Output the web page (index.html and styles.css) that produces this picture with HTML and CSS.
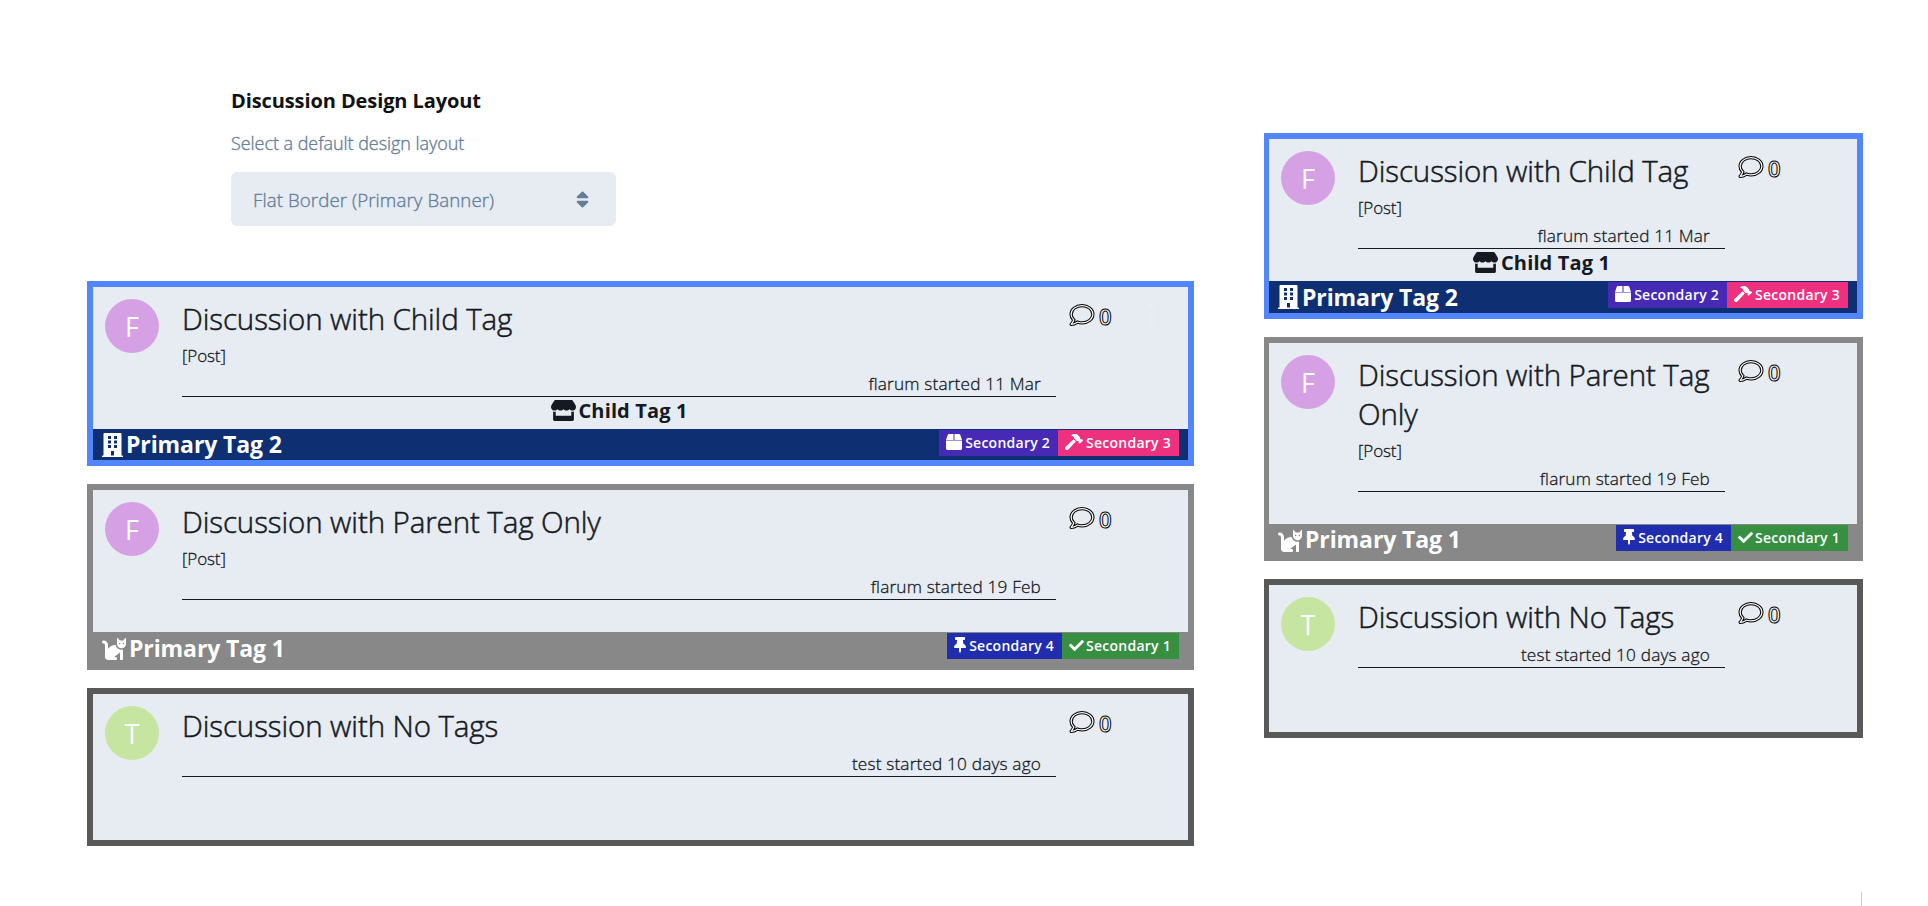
FILE: index.html
```html
<!DOCTYPE html>
<html lang="en">
<head>
<meta charset="utf-8">
<title>Discussion Design Layout</title>
<link rel="stylesheet" href="styles.css">
</head>
<body>
<svg class="sprite" aria-hidden="true">
  <symbol id="comment" viewBox="0 0 512 512" overflow="visible"><path d="M256 32C114.6 32 0 125.1 0 240c0 47.6 19.9 91.2 52.9 126.3C38 405.7 7 439.1 6.5 439.5c-6.6 7-8.4 17.2-4.6 26S14.4 480 24 480c61.5 0 110-25.7 139.1-46.3C192 442.8 223.2 448 256 448c141.4 0 256-93.1 256-208S397.4 32 256 32zm0 368c-26.7 0-53.1-4.1-78.4-12.1l-22.7-7.2-19.5 13.8c-14.3 10.1-33.9 21.4-57.5 29 7.3-12.1 14.4-25.7 19.9-40.2l10.6-28.1-20.6-21.8C69.7 314.1 48 282.2 48 240c0-88.2 93.3-160 208-160s208 71.8 208 160-93.3 160-208 160z"/></symbol>
  <symbol id="building" viewBox="0 0 448 512"><path fill-rule="evenodd" d="M436 480h-20V24c0-13-11-24-24-24H56C43 0 32 11 32 24v456H12c-7 0-12 5-12 12v20h448v-20c0-7-5-12-12-12zM128 64h64v64h-64zM256 64h64v64h-64zM128 160h64v64h-64zM256 160h64v64h-64zM128 256h64v64h-64zM256 256h64v64h-64zM192 384h64v96h-64z"/></symbol>
  <symbol id="store" viewBox="0 0 616 512"><path d="M602 118.6L537.1 15C531.3 5.7 521 0 510 0H106C95 0 84.7 5.7 78.9 15L14 118.6c-33.5 53.5-3.8 127.9 58.8 136.4 4.5.6 9.1.9 13.7.9 29.6 0 55.8-13 73.8-33.1 18 20.1 44.3 33.1 73.8 33.1 29.6 0 55.8-13 73.8-33.1 18 20.1 44.3 33.1 73.8 33.1 29.6 0 55.8-13 73.8-33.1 18.1 20.1 44.3 33.1 73.8 33.1 4.7 0 9.2-.3 13.7-.9 62.8-8.4 92.6-82.8 59-136.4zM529.5 288c-10 0-19.9-1.5-29.5-3.8V384H116v-99.8c-9.6 2.2-19.5 3.8-29.5 3.8-6 0-12.1-.4-18-1.2-5.6-.8-11.1-2.1-16.4-3.6V480c0 17.7 14.3 32 32 32h448c17.7 0 32-14.3 32-32V283.2c-5.4 1.6-10.8 2.9-16.4 3.6-6.1.8-12.1 1.2-18.2 1.2z"/></symbol>
  <symbol id="box" viewBox="0 0 512 512"><path d="M509.5 184.6L458.9 32.8C452.4 13.2 434.1 0 413.4 0H272v192h238.7c-.4-2.5-.4-5-1.2-7.4zM240 0H98.6c-20.7 0-39 13.2-45.5 32.8L2.5 184.6c-.8 2.4-.8 4.9-1.2 7.4H240V0zM0 208v256c0 26.5 21.5 48 48 48h416c26.5 0 48-21.5 48-48V208H0z"/></symbol>
  <symbol id="hammer" viewBox="0 0 576 512"><path d="M571.31 193.94l-22.63-22.63c-6.25-6.25-16.38-6.25-22.63 0l-11.31 11.31-28.9-28.9c5.63-21.31.36-44.9-16.35-61.61l-45.25-45.25c-62.48-62.48-163.79-62.48-226.28 0l90.51 45.25v18.75c0 16.97 6.74 33.25 18.75 45.25l49.14 49.14c16.71 16.71 40.3 21.98 61.61 16.35l28.9 28.9-11.31 11.31c-6.25 6.25-6.25 16.38 0 22.63l22.63 22.63c6.25 6.25 16.38 6.25 22.63 0l90.51-90.51c6.23-6.24 6.23-16.37-.02-22.62zm-286.72-15.2c-3.7-3.7-6.84-7.79-9.85-11.95L19.64 404.96c-25.57 23.88-26.26 64.19-1.53 88.93s65.05 24.05 88.92-1.53l238.13-255.07c-3.96-2.91-7.9-5.87-11.44-9.41l-49.13-49.14z"/></symbol>
  <symbol id="thumbtack" viewBox="0 0 384 512"><path d="M298.028 214.267L285.793 96H328c13.255 0 24-10.745 24-24V24c0-13.255-10.745-24-24-24H56C42.745 0 32 10.745 32 24v48c0 13.255 10.745 24 24 24h42.207L85.972 214.267C37.465 236.82 0 277.261 0 328c0 13.255 10.745 24 24 24h136v104.007c0 1.242.289 2.467.845 3.578l24 48c2.941 5.882 11.364 5.893 14.311 0l24-48a8.008 8.008 0 0 0 .845-3.578V352h136c13.255 0 24-10.745 24-24-.001-51.183-37.983-91.42-85.973-113.733z"/></symbol>
  <symbol id="check" viewBox="0 0 512 512"><path d="M173.898 439.404l-166.4-166.4c-9.997-9.997-9.997-26.206 0-36.204l36.203-36.204c9.997-9.998 26.207-9.998 36.204 0L192 312.69 432.095 72.596c9.997-9.997 26.207-9.997 36.204 0l36.203 36.204c9.997 9.997 9.997 26.206 0 36.204l-294.4 294.401c-9.998 9.997-26.207 9.997-36.204-.001z"/></symbol>
  <symbol id="cat" viewBox="0 0 512 512"><path d="M290.59 192c-20.18 0-106.82 1.98-162.59 85.95V192c0-52.94-43.06-96-96-96-17.67 0-32 14.33-32 32s14.33 32 32 32c17.64 0 32 14.36 32 32v256c0 35.3 28.7 64 64 64h176c8.84 0 16-7.16 16-16v-16c0-17.67-14.33-32-32-32h-32l128-96v144c0 8.84 7.16 16 16 16h32c8.84 0 16-7.16 16-16V289.86c-10.29 2.67-20.89 4.54-32 4.54-61.81 0-113.52-44.05-125.41-102.4zM448 96h-64l-64-64v134.4c0 53.02 42.98 96 96 96s96-42.98 96-96V32l-64 64zm-72 80c-8.84 0-16-7.16-16-16s7.16-16 16-16 16 7.16 16 16-7.16 16-16 16zm80 0c-8.84 0-16-7.16-16-16s7.16-16 16-16 16 7.16 16 16-7.16 16-16 16z"/></symbol>
  <symbol id="sort" viewBox="0 0 320 512"><path d="M41 288h238c21.4 0 32.1 25.9 17 41L177 448c-9.4 9.4-24.6 9.4-33.9 0L24 329c-15.1-15.1-4.4-41 17-41zm255-105L177 64c-9.4-9.4-24.6-9.4-33.9 0L24 183c-15.1 15.1-4.4 41 17 41h238c21.4 0 32.1-25.9 17-41z"/></symbol>
</svg>

<main class="page">
  <section class="column column-wide">
    <div class="setting">
      <h2 class="setting-title">Discussion Design Layout</h2>
      <p class="setting-help">Select a default design layout</p>
      <div class="select"><span>Flat Border (Primary Banner)</span><svg class="select-icon"><use href="#sort"/></svg></div>
    </div>
    <div class="list">
      <article class="card card-blue">
        <div class="card-main">
          <div class="avatar avatar-f">F</div>
          <div class="content">
            <h3 class="title">Discussion with Child Tag</h3>
            <p class="post">[Post]</p>
            <p class="meta">flarum started 11 Mar</p>
            <div class="child"><svg class="child-icon"><use href="#store"/></svg>Child Tag 1</div>
          </div>
          <div class="replies"><svg class="comment"><use href="#comment"/></svg><span class="count">0</span><span class="dots"><i></i><i></i><i></i></span></div>
        </div>
        <footer class="banner">
          <div class="primary"><svg class="i-building"><use href="#building"/></svg>Primary Tag 2</div>
          <div class="badges">
            <span class="badge badge-purple"><svg class="i-box"><use href="#box"/></svg>Secondary 2</span>
            <span class="badge badge-pink"><svg class="i-hammer"><use href="#hammer"/></svg>Secondary 3</span>
          </div>
        </footer>
      </article>
      <article class="card card-gray">
        <div class="card-main">
          <div class="avatar avatar-f">F</div>
          <div class="content">
            <h3 class="title">Discussion with Parent Tag Only</h3>
            <p class="post">[Post]</p>
            <p class="meta">flarum started 19 Feb</p>
            <div class="child"></div>
          </div>
          <div class="replies"><svg class="comment"><use href="#comment"/></svg><span class="count">0</span></div>
        </div>
        <footer class="banner">
          <div class="primary"><svg class="i-cat"><use href="#cat"/></svg>Primary Tag 1</div>
          <div class="badges">
            <span class="badge badge-blue"><svg class="i-pin"><use href="#thumbtack"/></svg>Secondary 4</span>
            <span class="badge badge-green"><svg class="i-check"><use href="#check"/></svg>Secondary 1</span>
          </div>
        </footer>
      </article>
      <article class="card card-dark">
        <div class="card-main">
          <div class="avatar avatar-t">T</div>
          <div class="content">
            <h3 class="title">Discussion with No Tags</h3>
            <p class="meta">test started 10 days ago</p>
            <div class="child"></div>
          </div>
          <div class="replies"><svg class="comment"><use href="#comment"/></svg><span class="count">0</span></div>
        </div>
        <footer class="banner"></footer>
      </article>
    </div>
  </section>

  <section class="column column-narrow">
    <div class="list">
      <article class="card card-blue">
        <div class="card-main">
          <div class="avatar avatar-f">F</div>
          <div class="content">
            <h3 class="title">Discussion with Child Tag</h3>
            <p class="post">[Post]</p>
            <p class="meta">flarum started 11 Mar</p>
            <div class="child"><svg class="child-icon"><use href="#store"/></svg>Child Tag 1</div>
          </div>
          <div class="replies"><svg class="comment"><use href="#comment"/></svg><span class="count">0</span></div>
        </div>
        <footer class="banner">
          <div class="primary"><svg class="i-building"><use href="#building"/></svg>Primary Tag 2</div>
          <div class="badges">
            <span class="badge badge-purple"><svg class="i-box"><use href="#box"/></svg>Secondary 2</span>
            <span class="badge badge-pink"><svg class="i-hammer"><use href="#hammer"/></svg>Secondary 3</span>
          </div>
        </footer>
      </article>
      <article class="card card-gray">
        <div class="card-main">
          <div class="avatar avatar-f">F</div>
          <div class="content">
            <h3 class="title">Discussion with Parent Tag Only</h3>
            <p class="post">[Post]</p>
            <p class="meta">flarum started 19 Feb</p>
            <div class="child"></div>
          </div>
          <div class="replies"><svg class="comment"><use href="#comment"/></svg><span class="count">0</span></div>
        </div>
        <footer class="banner">
          <div class="primary"><svg class="i-cat"><use href="#cat"/></svg>Primary Tag 1</div>
          <div class="badges">
            <span class="badge badge-blue"><svg class="i-pin"><use href="#thumbtack"/></svg>Secondary 4</span>
            <span class="badge badge-green"><svg class="i-check"><use href="#check"/></svg>Secondary 1</span>
          </div>
        </footer>
      </article>
      <article class="card card-dark">
        <div class="card-main">
          <div class="avatar avatar-t">T</div>
          <div class="content">
            <h3 class="title">Discussion with No Tags</h3>
            <p class="meta">test started 10 days ago</p>
            <div class="child"></div>
          </div>
          <div class="replies"><svg class="comment"><use href="#comment"/></svg><span class="count">0</span></div>
        </div>
        <footer class="banner"></footer>
      </article>
    </div>
    <div class="edge"></div>
  </section>
</main>
</body>
</html>
```
FILE: styles.css
```css
* { box-sizing: border-box; }
body { margin: 0; background: #fff; color: #141922; font-family: "Open Sans", "Noto Sans", sans-serif; }
h2, h3, p { margin: 0; }
svg { display: block; flex: none; fill: currentColor; }
.sprite { width: 0; height: 0; position: absolute; }

.page { display: flex; gap: 70px; height: 906px; padding-left: 87px; overflow: hidden; }
.column { display: flex; flex-direction: column; }
.column-wide { --short: 31px; --tall: 32px; width: 1107px; padding-top: 86px; }
.column-narrow { --short: 32px; --tall: 31px; width: 599px; padding-top: 133px; }

.setting { width: 529px; height: 195px; padding-left: 144px; }
.setting-title { font-size: 20px; line-height: 30px; font-weight: 700; letter-spacing: -.1px; color: #111; }
.setting-help { margin-top: 11px; font-size: 18px; line-height: 32px; font-weight: 300; letter-spacing: -.05px; color: #667d99; -webkit-text-stroke: .35px #667d99; }
.select { display: flex; align-items: center; justify-content: space-between; width: 385px; height: 54px; margin-top: 13px; padding: 0 27px 0 22px; border-radius: 6px; background: #e7ecf3; color: #667d99; font-size: 18.7px; font-weight: 300; letter-spacing: .08px; }
.select span { -webkit-text-stroke: .35px #667d99; }
.select-icon { width: 13px; height: 21px; }

.list { display: flex; flex-direction: column; gap: 18px; }
.card { border: 6px solid var(--edge); background: #e7ecf3; }
.card-blue { --edge: #5286ff; --banner: #0e2f72; }
.card-gray { --edge: #888; --banner: #888; }
.card-dark { --edge: #595a58; }
.column-narrow .card { border-left-width: 5px; }
.card-main { display: flex; padding: 12px 0 0 12px; }
.avatar { flex: none; width: 54px; height: 54px; margin-right: 23px; border-radius: 50%; color: #fff; font-size: 27px; font-weight: 400; line-height: 56px; text-align: center; }
.avatar-f { background: #d6a0e5; }
.avatar-t { background: #c6e5a0; }
.content { flex: 1; }
.title { margin-bottom: 4px; font-size: 29.5px; line-height: 39px; font-weight: 300; letter-spacing: -.1px; -webkit-text-stroke: .5px #141922; }
.post, .meta { font-weight: 300; -webkit-text-stroke: .3px #141922; }
.post { height: 27px; font-size: 17px; line-height: 27px; letter-spacing: -.1px; }
.meta { height: 28px; padding-right: 15px; border-bottom: 1px solid #141922; font-size: 17.2px; line-height: 29px; letter-spacing: .18px; text-align: right; }
.child { display: flex; align-items: flex-start; justify-content: center; gap: 3px; height: 32px; font-size: 20px; font-weight: 700; line-height: 28px; letter-spacing: .13px; }
.child-icon { width: 25px; height: 21px; margin-top: 3px; }

.replies { display: flex; align-items: flex-start; width: 132px; padding: 4px 0 0 14px; }
.comment { width: 24px; height: 24px; overflow: visible; fill: #fff; stroke: #000; stroke-width: 22px; }
.count { margin-left: 5px; color: #fff; font-size: 22px; line-height: 26px; font-weight: 600; -webkit-text-stroke: 1px #000; }
.dots { display: flex; flex-direction: column; gap: 3px; margin-left: 36px; }
.dots i { width: 7px; height: 6px; border-radius: 3px; background: #eaeef4; }

.banner { display: flex; justify-content: space-between; height: var(--short); padding: 0 9px; background: var(--banner, transparent); color: #fff; }
.card-gray .banner { height: var(--tall); }
.primary { display: flex; align-items: center; gap: 3px; font-size: 23px; line-height: 31px; font-weight: 700; letter-spacing: -.1px; }
.i-building { width: 21px; height: 24px; }
.i-cat { width: 24px; height: 24px; }
.badges { display: flex; align-items: flex-start; padding-top: 1px; }
.badge { display: flex; align-items: center; gap: 3px; height: 26px; padding: 0 8px 2px 7px; font-size: 14px; font-weight: 600; letter-spacing: .25px; }
.badge-purple { background: #462ab5; }
.badge-pink { background: #ee317f; }
.badge-blue { background: #1f2dae; }
.badge-green { gap: 2px; background: #379042; }
.i-box { width: 16px; height: 16px; }
.i-check { width: 15px; height: 15px; }
.i-hammer { width: 18px; height: 16px; }
.i-pin { width: 12px; height: 16px; }

.edge { width: 1px; height: 14px; margin: auto 1px 0 auto; background: #ccc; }
```
